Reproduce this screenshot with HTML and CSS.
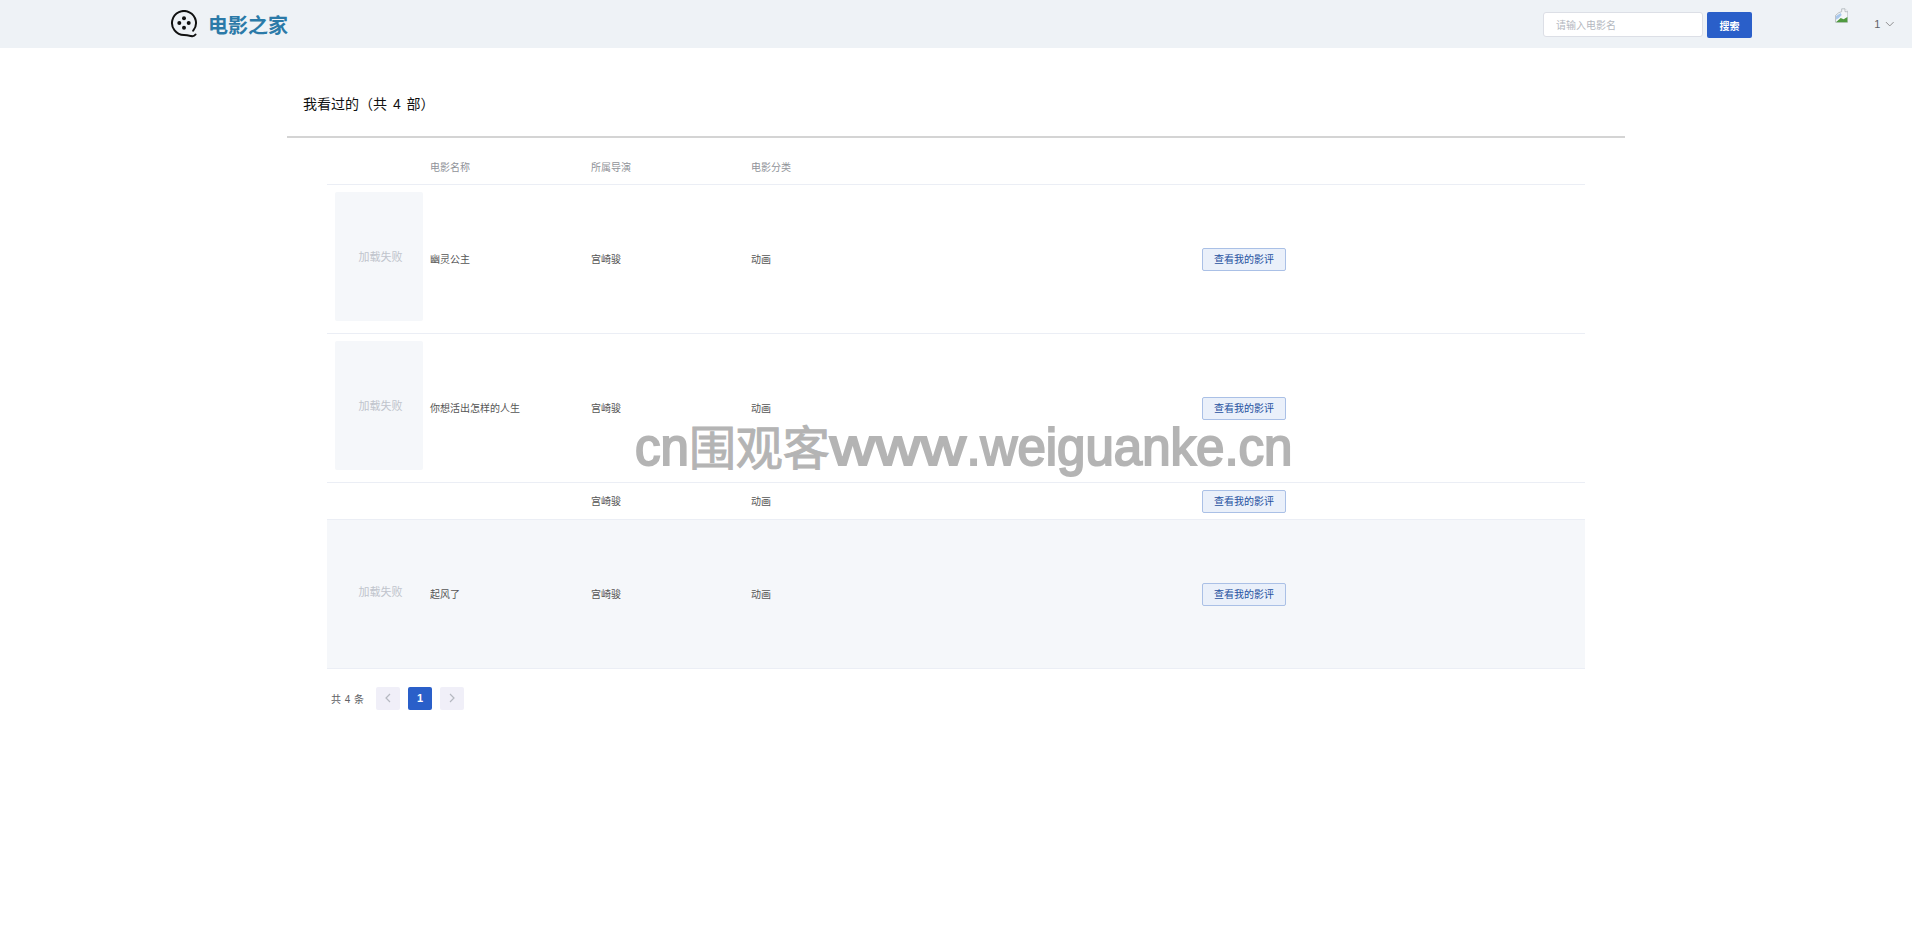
FILE: index.html
```html
<!DOCTYPE html>
<html lang="zh-CN">
<head>
    <meta charset="UTF-8">
    <title>电影之家</title>
    <link rel="stylesheet" href="styles.css">
</head>
<body>
    <header class="topbar">
        <div class="brand">
            <svg class="brand-icon" viewBox="0 0 28 28" width="28" height="28">
                <path d="M23.200 20.700A12 12 0 1 0 14 25c3 0 4.500 .4 7 1 2 .5 3.500 0 4.500-1.500" fill="none" stroke="#111" stroke-width="2" stroke-linecap="round"/>
                <circle cx="9.300" cy="13" r="2" fill="#111"/>
                <circle cx="14" cy="8.300" r="2" fill="#111"/>
                <circle cx="18.700" cy="13" r="2" fill="#111"/>
                <circle cx="14" cy="17.700" r="2" fill="#111"/>
            </svg>
            <span class="brand-name">电影之家</span>
        </div>
        <div class="search">
            <input class="search-input" type="text" placeholder="请输入电影名">
            <button class="search-btn">搜索</button>
        </div>
        <div class="user">
            <svg class="broken-img" viewBox="0 0 14 15" width="14" height="15">
                <path d="M.5 14.500V7.500L4 4.500l3-1V.5h3.500l3 3V14.500z" fill="#f4f6f8" stroke="#a9b0b5" stroke-width=".8"/>
                <path d="M10.500 .5v3h3" fill="#fff" stroke="#a9b0b5" stroke-width=".8"/>
                <path d="M1 8l5-3 1 2-3 3-3 2z" fill="#a9c8ec"/>
                <path d="M1 14.500 6 10l3 1.500 4-2.500v5.500z" fill="#4f9a3f"/>
            </svg>
            <span class="user-name">1</span>
            <svg class="chevron" viewBox="0 0 10 6" width="10" height="6">
                <path d="M1 1l4 4 4-4" fill="none" stroke="#888" stroke-width="1"/>
            </svg>
        </div>
    </header>

    <main class="content">
        <h2 class="page-title">我看过的（共 4 部）</h2>
        <div class="table-wrap">
            <table class="movie-table">
                <colgroup>
                    <col class="col-poster">
                    <col class="col-name">
                    <col class="col-director">
                    <col class="col-cat">
                    <col>
                </colgroup>
                <thead>
                    <tr>
                        <th></th>
                        <th>电影名称</th>
                        <th>所属导演</th>
                        <th>电影分类</th>
                        <th></th>
                    </tr>
                </thead>
                <tbody>
                    <tr>
                        <td class="poster-cell"><div class="poster">加载失败</div></td>
                        <td>幽灵公主</td>
                        <td>宫崎骏</td>
                        <td>动画</td>
                        <td><button class="review-btn">查看我的影评</button></td>
                    </tr>
                    <tr>
                        <td class="poster-cell"><div class="poster">加载失败</div></td>
                        <td>你想活出怎样的人生</td>
                        <td>宫崎骏</td>
                        <td>动画</td>
                        <td><button class="review-btn">查看我的影评</button></td>
                    </tr>
                    <tr>
                        <td class="poster-cell"></td>
                        <td></td>
                        <td>宫崎骏</td>
                        <td>动画</td>
                        <td><button class="review-btn">查看我的影评</button></td>
                    </tr>
                    <tr class="row-hover">
                        <td class="poster-cell"><div class="poster">加载失败</div></td>
                        <td>起风了</td>
                        <td>宫崎骏</td>
                        <td>动画</td>
                        <td><button class="review-btn">查看我的影评</button></td>
                    </tr>
                </tbody>
            </table>
            <div class="pager">
                <span class="pager-total">共 4 条</span>
                <button class="page-btn">
                    <svg viewBox="0 0 6 10" width="6" height="10"><path d="M5 1 1 5l4 4" fill="none" stroke="#b5b8c0" stroke-width="1.200"/></svg>
                </button>
                <button class="page-btn page-current">1</button>
                <button class="page-btn">
                    <svg viewBox="0 0 6 10" width="6" height="10"><path d="M1 1l4 4-4 4" fill="none" stroke="#b5b8c0" stroke-width="1.200"/></svg>
                </button>
            </div>
        </div>
    </main>

    <div class="watermark">cn<span class="wm-cjk">围观客</span><span class="wm-www">www</span>.weiguanke.cn</div>
</body>
</html>
```

FILE: styles.css
```css
* {
    box-sizing: border-box;
}
body {
    margin: 0;
    height: 930px;
    overflow: hidden;
    background-color: #fff;
    color: #606266;
    font-family: "Liberation Sans", "Noto Sans CJK SC", sans-serif;
    font-size: 10px;
}
.topbar {
    display: flex;
    align-items: flex-start;
    height: 48px;
    background-color: #eef2f6;
}
.brand {
    display: flex;
    align-items: center;
    gap: 10px;
    margin-left: 170px;
    height: 48px;
}
.brand-icon {
    display: block;
}
.brand-name {
    color: #2b7aa8;
    font-size: 20px;
    font-weight: bold;
}
.search {
    display: flex;
    gap: 4px;
    margin-left: auto;
    padding-top: 12px;
}
.search-input {
    width: 160px;
    height: 25px;
    padding: 1px 12px 0;
    border: 1px solid #dcdfe6;
    border-radius: 3px;
    background: #fff;
    font-family: inherit;
    font-size: 10px;
}
.search-input::placeholder {
    color: #b4b8c0;
}
.search-btn {
    width: 45px;
    height: 26px;
    padding: 0;
    border: none;
    border-radius: 2px;
    background-color: #2a5fc9;
    color: #fff;
    font-family: inherit;
    font-size: 10px;
    font-weight: bold;
}
.user {
    display: flex;
    margin-left: 83px;
    margin-right: 17px;
    width: 60px;
}
.broken-img {
    margin-top: 8px;
}
.user-name {
    margin-left: 26px;
    margin-top: 18px;
    font-size: 11px;
    color: #606266;
}
.chevron {
    margin-left: 5px;
    margin-top: 21px;
}
.content {
    width: 1338px;
    margin-left: 287px;
}
.page-title {
    margin: 0;
    height: 90px;
    padding: 46px 0 0 16px;
    border-bottom: 2px solid #d4d4d4;
    color: #111;
    font-size: 14px;
    font-weight: normal;
    line-height: 20px;
    word-spacing: 2px;
}
.table-wrap {
    padding: 13px 40px 0;
}
.movie-table {
    width: 1258px;
    table-layout: fixed;
    border-collapse: collapse;
}
.col-poster {
    width: 93px;
}
.col-name {
    width: 161px;
}
.col-director {
    width: 160px;
}
.col-cat {
    width: 451px;
}
.movie-table th,
.movie-table td {
    padding: 7px 10px 6px;
    border-bottom: 1px solid #ebeef5;
    text-align: left;
    font-size: 10px;
    line-height: 23px;
}
.movie-table th {
    height: 33px;
    padding: 0 10px;
    color: #909399;
    font-weight: normal;
}
.movie-table td {
    color: #555;
}
.movie-table .poster-cell {
    padding: 7px 0 12px 8px;
}
.poster {
    display: flex;
    align-items: center;
    justify-content: center;
    width: 88px;
    height: 129px;
    padding-left: 3px;
    padding-top: 2px;
    border-radius: 2px;
    background-color: #f5f7fa;
    color: #c0c4cc;
    font-size: 11px;
}
.row-hover td {
    background-color: #f5f7fa;
}
.review-btn {
    display: block;
    width: 84px;
    height: 23px;
    padding: 0;
    border: 1px solid #aac0e6;
    border-radius: 2px;
    background-color: #eaf0fa;
    color: #26519f;
    font-family: inherit;
    font-size: 10px;
    line-height: 21px;
}
.pager {
    display: flex;
    align-items: center;
    height: 23px;
    margin-top: 18px;
    padding-left: 4px;
}
.pager-total {
    width: 45px;
    color: #606266;
    font-size: 10px;
    word-spacing: 1px;
}
.page-btn {
    display: flex;
    align-items: center;
    justify-content: center;
    width: 24px;
    height: 23px;
    margin-right: 8px;
    padding: 0;
    border: none;
    border-radius: 2px;
    background-color: #f0eff8;
    font-family: inherit;
    font-size: 11px;
    font-weight: bold;
}
.page-current {
    background-color: #2a5fc9;
    color: #fff;
}
.watermark {
    position: absolute;
    left: 635px;
    top: 420px;
    color: #b4b4b4;
    font-family: "Liberation Sans", "Noto Sans CJK SC", sans-serif;
    font-size: 51px;
    line-height: 56px;
    white-space: nowrap;
    -webkit-text-stroke: 2px #b4b4b4;
}
.wm-cjk {
    font-size: 47px;
    -webkit-text-stroke-width: 1px;
}
.wm-www {
    display: inline-block;
    margin-right: 26px;
    transform: scaleX(1.23);
    transform-origin: left center;
}
```
